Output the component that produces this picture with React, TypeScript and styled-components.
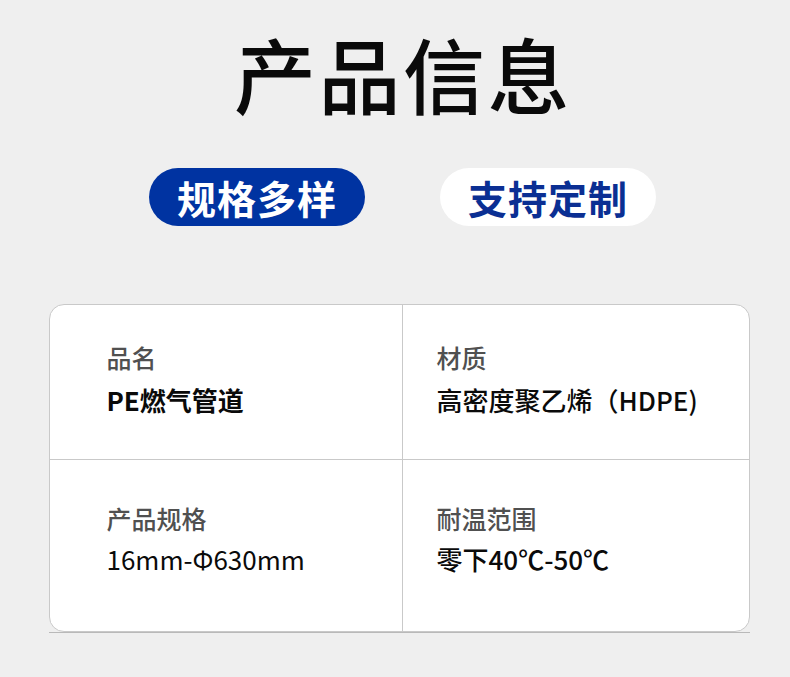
import React from "react";
import styled, { createGlobalStyle } from "styled-components";

const Global = createGlobalStyle`
  html, body { margin: 0; padding: 0; background: #efefef; }
  body { font-family: "Noto Sans CJK SC", "Noto Sans", sans-serif; }
`;

const Page = styled.div`
  width: 790px;
  height: 677px;
  background: #efefef;
  display: flex;
  flex-direction: column;
  align-items: center;
  padding-top: 32px;
  box-sizing: border-box;
`;

const Title = styled.h1`
  margin: 0;
  font-size: 82px;
  line-height: 1;
  font-weight: 500;
  color: #0a0a0a;
  letter-spacing: 2.5px;
  padding-left: 16px;
`;

const Pills = styled.div`
  display: flex;
  gap: 75px;
  margin-top: 54px;
  padding-left: 15px;
`;

const Pill = styled.div<{ $filled?: boolean }>`
  width: 216px;
  height: 58px;
  border-radius: 29px;
  display: flex;
  align-items: center;
  justify-content: center;
  font-size: 39px;
  font-weight: 700;
  letter-spacing: 1px;
  background: ${(p) => (p.$filled ? "#0033a1" : "#ffffff")};
  color: ${(p) => (p.$filled ? "#ffffff" : "#0b2f93")};
`;

const CardWrap = styled.div`
  margin-top: 78px;
  width: 701px;
  margin-left: 8px;
  border-bottom: 1px solid #b9b9b9;
`;

const Card = styled.div`
  background: #ffffff;
  border: 1px solid #c9c9c9;
  border-radius: 15px;
  display: grid;
  grid-template-columns: 352px 1fr;
  grid-template-rows: 154px 172px;
  overflow: hidden;
`;

const Cell = styled.div<{ $right?: boolean; $bottom?: boolean }>`
  display: flex;
  flex-direction: column;
  justify-content: flex-start;
  padding-left: ${(p) => (p.$right ? "34px" : "57px")};
  padding-top: ${(p) => (p.$bottom ? "43px" : "37px")};
  border-left: ${(p) => (p.$right ? "1px solid #c9c9c9" : "none")};
  border-top: ${(p) => (p.$bottom ? "1px solid #c9c9c9" : "none")};
`;

const Label = styled.div`
  font-size: 25px;
  line-height: 30px;
  color: #505050;
  font-weight: 500;
`;

const Value = styled.div<{ $weight?: number; $gap?: number }>`
  margin-top: ${(p) => p.$gap ?? 12}px;
  font-size: 26px;
  line-height: 30px;
  color: #0a0a0a;
  font-weight: ${(p) => p.$weight ?? 500};
`;

const items = [
  { label: "品名", value: "PE燃气管道", weight: 700, gap: 13 },
  { label: "材质", value: "高密度聚乙烯（HDPE)", weight: 500, gap: 13 },
  { label: "产品规格", value: "16mm-Φ630mm", weight: 400, gap: 11 },
  { label: "耐温范围", value: "零下40℃-50℃", weight: 500, gap: 11 },
];

export default function App() {
  return (
    <>
      <Global />
      <Page>
        <Title>产品信息</Title>
        <Pills>
          <Pill $filled>规格多样</Pill>
          <Pill>支持定制</Pill>
        </Pills>
        <CardWrap>
          <Card>
            {items.map((it, i) => (
              <Cell key={it.label} $right={i % 2 === 1} $bottom={i >= 2}>
                <Label>{it.label}</Label>
                <Value $weight={it.weight} $gap={it.gap}>
                  {it.value}
                </Value>
              </Cell>
            ))}
          </Card>
        </CardWrap>
      </Page>
    </>
  );
}
